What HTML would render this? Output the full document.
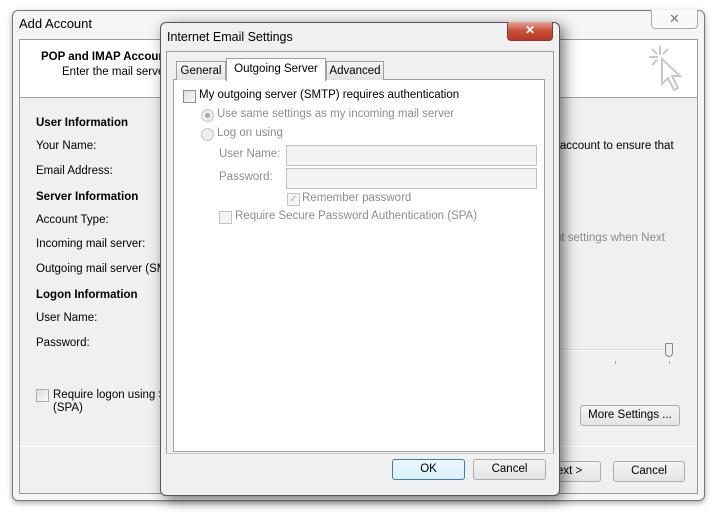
<!DOCTYPE html>
<html><head><meta charset="utf-8"><style>
*{margin:0;padding:0;box-sizing:border-box}
body{width:718px;height:515px;background:#fff;position:relative;overflow:hidden;font-family:"Liberation Sans",sans-serif;font-size:11.5px;color:#000}
.a{position:absolute;white-space:nowrap}
.b{font-weight:bold}
.g{color:#8d8d8d}
.btn{position:absolute;border:1px solid #acacac;border-radius:3px;background:linear-gradient(#f2f2f2,#e5e5e5);text-align:center;line-height:19px;height:21px}
.cb{position:absolute;width:13px;height:13px;border:1px solid #8e8e8e;background:linear-gradient(135deg,#ddd,#fafafa)}
.cbd{border-color:#c3c3c3;background:#f4f4f4}
.rd{position:absolute;width:13px;height:13px;border-radius:50%;border:1px solid #c3c3c3;background:#eee}
.tb{position:absolute;height:21px;border:1px solid #c3c3c3;background:#f4f4f4}
</style></head><body>
<div class="a" style="left:12px;top:10px;width:693px;height:491px;border:1px solid #7a7a7a;border-radius:6px;background:#f5f5f5;box-shadow:0 2px 6px rgba(0,0,0,.35)"></div>
<div class="a" style="left:19px;top:16px;font-size:13px">Add Account</div>
<div class="a" style="left:651px;top:10px;width:47px;height:19px;border:1px solid #aaa;border-top:none;border-radius:0 0 4px 4px;background:#f8f8f8;text-align:center;color:#777;font-size:13px;line-height:17px">✕</div>
<div class="a" style="left:19px;top:39px;width:679px;height:455px;border:1px solid #9a9a9a;background:#f0f0f0"></div>
<div class="a" style="left:20px;top:40px;width:677px;height:58px;background:#fff;border-bottom:1px solid #a0a0a0"></div>
<div class="a b" style="left:41px;top:51px">POP and IMAP Account Settings</div>
<div class="a" style="left:62px;top:66px">Enter the mail server settings for your account.</div>
<svg class="a" style="left:646px;top:44px" width="42" height="52" viewBox="0 0 42 52"><g stroke="#c8c8c8" stroke-width="2" fill="none"><path d="M14 2v9M3 13h9M6 5l5 5M22 5l-5 5M6 21l5-5"/><path d="M16 15v25l6-6 6 12 4-2-6-12h8z" fill="#fff"/></g></svg>
<div class="a b" style="left:36px;top:117px">User Information</div>
<div class="a" style="left:36px;top:140px">Your Name:</div>
<div class="a" style="left:36px;top:165px">Email Address:</div>
<div class="a b" style="left:36px;top:191px">Server Information</div>
<div class="a" style="left:36px;top:214px">Account Type:</div>
<div class="a" style="left:36px;top:238px">Incoming mail server:</div>
<div class="a" style="left:36px;top:263px">Outgoing mail server (SMTP):</div>
<div class="a b" style="left:36px;top:289px">Logon Information</div>
<div class="a" style="left:36px;top:312px">User Name:</div>
<div class="a" style="left:36px;top:337px">Password:</div>
<div class="cb" style="left:36px;top:389px;border-color:#aaa"></div>
<div class="a" style="left:53px;top:389px">Require logon using Secure</div>
<div class="a" style="left:53px;top:402px">(SPA)</div>
<div class="a" style="left:510px;top:140px">Test your account to ensure that</div>
<div class="a g" style="left:500px;top:232px">Test account settings when Next</div>
<div class="a" style="left:540px;top:349px;width:130px;height:2px;background:#dcdcdc;border-bottom:1px solid #fff"></div>
<div class="a" style="left:665px;top:343px;width:8px;height:14px;border:1px solid #888;border-radius:1px 1px 4px 4px;background:#eee"></div>
<div class="a" style="left:615px;top:361px;width:1px;height:3px;background:#aaa"></div>
<div class="a" style="left:669px;top:361px;width:1px;height:3px;background:#aaa"></div>
<div class="btn" style="left:580px;top:405px;width:100px">More Settings ...</div>
<div class="a" style="left:20px;top:446px;width:677px;height:1px;background:#b5b5b5;border-bottom:1px solid #fff"></div>
<div class="btn" style="left:530px;top:461px;width:71px">Next &gt;</div>
<div class="btn" style="left:613px;top:461px;width:72px">Cancel</div>
<div class="a" style="left:160px;top:22px;width:400px;height:474px;border:1px solid #555;border-radius:6px;background:#f0f0f0;box-shadow:4px 4px 14px rgba(0,0,0,.55)"></div>
<div class="a" style="left:167px;top:30px;font-size:12.5px">Internet Email Settings</div>
<div class="a" style="left:507px;top:22px;width:46px;height:19px;border:1px solid #8b3a30;border-top:none;border-radius:0 0 4px 4px;background:linear-gradient(#e6a193,#c9503a 50%,#b8351f);color:#fff;text-align:center;font-weight:bold;font-size:12px;line-height:17px">✕</div>
<div class="a" style="left:166px;top:51px;width:388px;height:403px;border:1px solid #a0a0a0;border-bottom-color:#c8c8c8"></div>
<div class="a" style="left:173px;top:79px;width:372px;height:373px;border:1px solid #a0a0a0;background:#fff"></div>
<div class="a" style="left:176px;top:61px;width:50px;height:19px;border:1px solid #a0a0a0;border-bottom:none;background:linear-gradient(#f5f5f5,#e3e3e3);text-align:center;line-height:18px">General</div>
<div class="a" style="left:326px;top:61px;width:58px;height:19px;border:1px solid #a0a0a0;border-bottom:none;background:linear-gradient(#f5f5f5,#e3e3e3);text-align:center;line-height:18px">Advanced</div>
<div class="a" style="left:226px;top:58px;width:100px;height:23px;border:1px solid #a0a0a0;border-bottom:none;background:#fff;text-align:center;line-height:20px">Outgoing Server</div>
<div class="cb" style="left:183px;top:90px"></div>
<div class="a" style="left:199px;top:89px">My outgoing server (SMTP) requires authentication</div>
<div class="rd" style="left:201px;top:109px"><div style="position:absolute;left:3px;top:3px;width:5px;height:5px;border-radius:50%;background:#aaa"></div></div>
<div class="a g" style="left:217px;top:108px">Use same settings as my incoming mail server</div>
<div class="rd" style="left:201px;top:128px"></div>
<div class="a g" style="left:217px;top:127px">Log on using</div>
<div class="a g" style="left:219px;top:148px">User Name:</div>
<div class="tb" style="left:286px;top:145px;width:251px"></div>
<div class="a g" style="left:219px;top:171px">Password:</div>
<div class="tb" style="left:286px;top:168px;width:251px"></div>
<div class="cb cbd" style="left:287px;top:193px;color:#aaa;font-size:10px;line-height:11px;text-align:center">✓</div>
<div class="a g" style="left:302px;top:192px">Remember password</div>
<div class="cb cbd" style="left:219px;top:211px"></div>
<div class="a g" style="left:235px;top:210px">Require Secure Password Authentication (SPA)</div>
<div class="btn" style="left:392px;top:459px;width:73px;border-color:#3c7fb1;background:linear-gradient(#eaf6fd,#d9f0fc)">OK</div>
<div class="btn" style="left:473px;top:459px;width:73px">Cancel</div>
</body></html>
